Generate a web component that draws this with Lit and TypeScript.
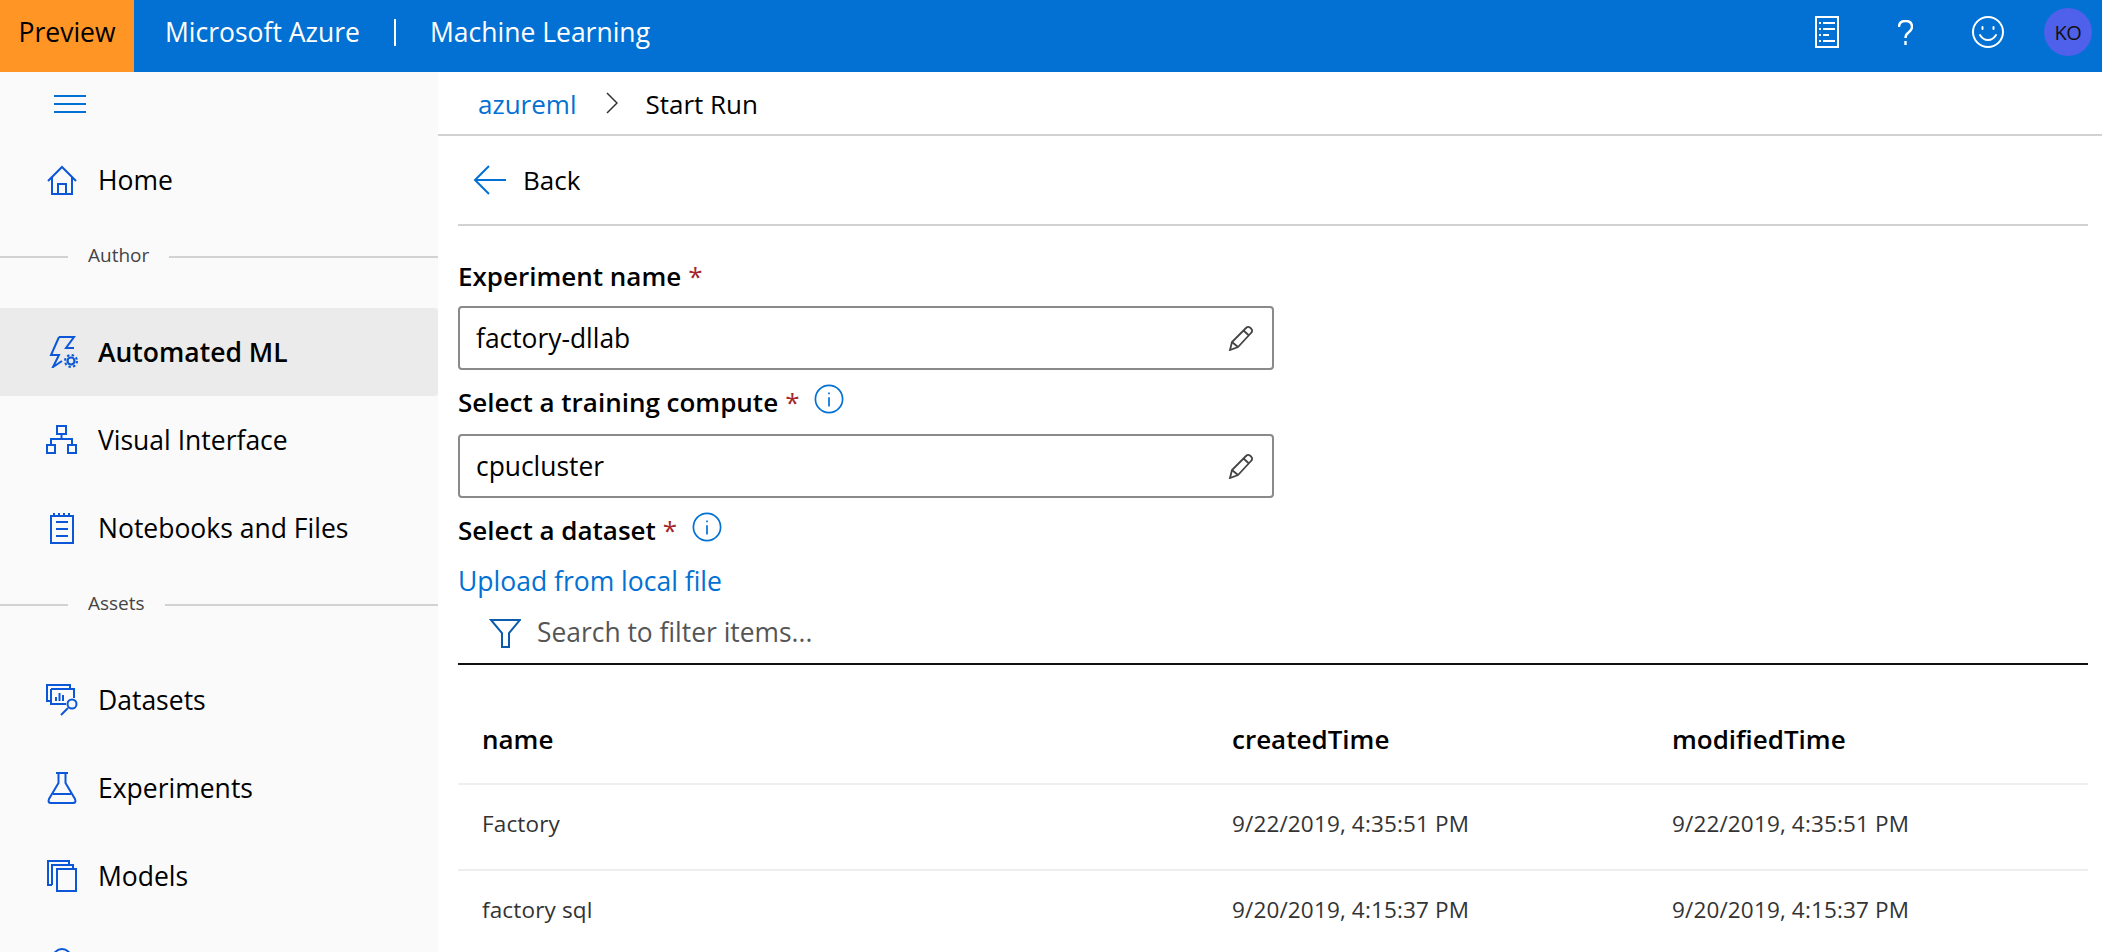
import { LitElement, html, css, svg } from 'lit';
import { customElement } from 'lit/decorators.js';

const icons: Record<string, unknown> = {
  home: svg`<path d="M2 17 16 3l14 14M6 13v17h20V13M12 30V20h8v10"/>`,
  auto: svg`<path d="M13 1h15l-8 11h8M13 1 5 19h8L7 31l9-6"/><circle cx="25" cy="25" r="3.5" stroke-width="2.2"/><circle cx="25" cy="25" r="6" stroke-dasharray="2.4 2.3"/>`,
  visual: svg`<path d="M11 2h9v8h-9zM1 21h8v8H1zM22 21h8v8h-8zM15.5 10v5M5 21v-6h21v6"/>`,
  notebook: svg`<path d="M5 4h22v27H5zM10 10h12M10 17h12M10 24h12M8 1v3M13 1v3M18 1v3M23 1v3"/>`,
  datasets: svg`<path d="M5 17H1V1h23v4"/><path d="M5 5h23v9M5 5v15h15"/><path d="M10 17v-4M13.5 17V9M17 17v-6"/><circle cx="26" cy="20" r="4.5"/><path d="m22 24-7 7"/>`,
  experiments: svg`<path d="M10 1h12M12.5 1v10L3 27q-1.5 4 2 4h22q3.5 0 2-4l-9.5-16V1M7 22h18"/>`,
  models: svg`<path d="M6 25H2V1h21v4M6 25V5h21v4M11 31V9h19v22z"/>`,
  more: svg`<circle cx="16" cy="10" r="9"/>`,
};

const author = [
  { label: 'Automated ML', icon: 'auto', active: true },
  { label: 'Visual Interface', icon: 'visual' },
  { label: 'Notebooks and Files', icon: 'notebook' },
];
const assets = [
  { label: 'Datasets', icon: 'datasets' },
  { label: 'Experiments', icon: 'experiments' },
  { label: 'Models', icon: 'models' },
  { label: '', icon: 'more' },
];
const rows = [
  ['Factory', '9/22/2019, 4:35:51 PM', '9/22/2019, 4:35:51 PM'],
  ['factory sql', '9/20/2019, 4:15:37 PM', '9/20/2019, 4:15:37 PM'],
];

@customElement('app-root')
export class AppRoot extends LitElement {
  static styles = css`
    :host {
      display: block;
      height: 952px;
      overflow: hidden;
      background: #fff;
      color: #000;
      font-family: 'Open Sans', 'Noto Sans', sans-serif;
    }
    svg { display: block; fill: none; stroke: currentColor; stroke-width: 2; }

    .topbar { display: flex; height: 72px; background: #0271d3; color: #fff; font-size: 26.5px; }
    .topbar > div { display: flex; align-items: center; padding-bottom: 8px; }
    .topbar > .preview { justify-content: center; width: 134px; background: #ff9524; color: #000; }
    .topbar > .brand { margin-left: 31px; }
    .topbar > .sep { align-self: center; width: 2px; height: 27px; margin: 0 34px 8px; padding: 0; background: #fff; }
    .topbar > .actions { margin-left: auto; margin-right: 10px; }
    .actions svg { margin-right: 59px; }
    .actions svg.smile { margin-right: 40px; }
    .actions svg.help { stroke-width: 2.4; }
    .avatar { display: flex; align-items: center; justify-content: center; width: 48px; height: 48px; border-radius: 50%; background: #4f60ea; color: #111; font-size: 20px; letter-spacing: -0.5px; }

    .body { display: flex; height: 880px; }
    .side { flex: none; width: 438px; background: #fafafa; }
    .toggle { display: flex; align-items: center; height: 64px; padding-left: 54px; color: #0271d3; }
    .item { display: flex; align-items: center; height: 88px; padding-left: 46px; font-size: 26.5px; box-sizing: border-box; }
    .item svg { flex: none; width: 32px; height: 32px; margin-right: 20px; color: #0b57d8; }
    .item.active { background: #ebebeb; font-weight: 600; border-radius: 0 3px 3px 0; }
    .group { display: flex; align-items: center; height: 84px; padding-bottom: 18px; box-sizing: border-box; font-size: 19px; color: #444; }
    .group span { margin-bottom: 5px; }
    .group::before { content: ''; width: 68px; height: 2px; background: #d2d2d2; margin-right: 20px; }
    .group::after { content: ''; flex: 1; height: 2px; background: #d2d2d2; margin-left: 20px; }

    .main { flex: 1; min-width: 0; }
    .crumbs { display: flex; align-items: center; height: 62px; padding-left: 40px; border-bottom: 2px solid #d2d2d2; font-size: 26px; }
    .crumbs a, .crumbs span { padding-top: 2px; }
    .crumbs a { color: #0271d3; }
    .crumbs svg { width: 12px; height: 22px; margin: 0 27px 0 30px; color: #333; stroke-width: 1.5; }
    .content { padding: 0 14px 0 20px; }
    .back { display: flex; align-items: center; height: 88px; border-bottom: 2px solid #d2d2d2; font-size: 26px; }
    .back svg { width: 34px; height: 32px; margin: 0 16px 0 15px; color: #0271d3; }

    .label { display: flex; align-items: center; height: 36px; margin: 14px 0; font-size: 26px; font-weight: 600; }
    .label.first { margin: 32px 0 12px; }
    .label .req { margin-left: 7px; color: #a4262c; font-weight: 400; }
    .label svg { width: 30px; height: 30px; margin: 0 0 6px 15px; color: #0271d3; stroke-width: 1.8; }
    .field { display: flex; align-items: center; justify-content: space-between; width: 816px; height: 64px; box-sizing: border-box; padding: 0 18px 0 16px; border: 2px solid #8a8a8a; border-radius: 4px; font-size: 26.4px; }
    .field svg { width: 26px; height: 26px; color: #444; stroke-width: 1.8; }
    .link { margin-top: -1px; color: #0271d3; font-size: 26.5px; line-height: 40px; }
    .search { display: flex; align-items: center; height: 62px; border-bottom: 2px solid #111; padding-left: 31px; font-size: 26.4px; color: #555; }
    .search svg { width: 32px; height: 32px; margin-right: 16px; color: #0b5cad; }

    .row { display: grid; grid-template-columns: 750px 440px 1fr; padding: 0 0 8px 24px; height: 86px; align-items: center; border-bottom: 2px solid #eee; box-sizing: border-box; font-size: 22.5px; letter-spacing: 0.15px; color: #333; }
    .row.head { height: 120px; padding: 30px 0 0 24px; font-size: 26px; font-weight: 600; color: #000; letter-spacing: 0; }
  `;

  private nav(it: { label: string; icon: string; active?: boolean }) {
    return html`<div class="item ${it.active ? 'active' : ''}">
      <svg viewBox="0 0 32 32">${icons[it.icon]}</svg>${it.label}
    </div>`;
  }

  private info() {
    return html`<svg viewBox="0 0 32 32"><circle cx="16" cy="16" r="14.5"/><path d="M16 14v10M16 9v2"/></svg>`;
  }

  private pencil() {
    return html`<svg viewBox="0 0 26 26"><path d="m2 25 2-8L18 3q2-2 4-.5l1.5 1.5q1.5 2-.5 4L10 22zM4 17l6 5M15.5 5.500l5.500 5"/></svg>`;
  }

  render() {
    return html`
      <header class="topbar">
        <div class="preview">Preview</div>
        <div class="brand">Microsoft Azure</div>
        <div class="sep"></div>
        <div>Machine Learning</div>
        <div class="actions">
          <svg width="24" height="32" viewBox="0 0 24 32"><path d="M1 1h22v30H1zM8 7h12M8 13h12M8 19h6M8 25h12M4 7h2M4 13h2M4 19h2M4 25h2"/></svg>
          <svg class="help" width="15" height="25" viewBox="0 0 15 25"><path d="M1 7q0-6 6.5-6T14 7q0 3-3.500 5.500Q7.500 14.500 7.500 18M7.500 21v4"/></svg>
          <svg class="smile" width="32" height="32" viewBox="0 0 32 32"><circle cx="16" cy="16" r="15"/><path d="M8 19q3 5 8 5t8-5M10.5 11v2M21.5 11v2" stroke-linecap="round"/></svg>
          <div class="avatar">KO</div>
        </div>
      </header>
      <div class="body">
        <nav class="side">
          <div class="toggle">
            <svg width="32" height="18" viewBox="0 0 32 18"><path d="M0 1h32M0 9h32M0 17h32"/></svg>
          </div>
          ${this.nav({ label: 'Home', icon: 'home' })}
          <div class="group"><span>Author</span></div>
          ${author.map((it) => this.nav(it))}
          <div class="group"><span>Assets</span></div>
          ${assets.map((it) => this.nav(it))}
        </nav>
        <main class="main">
          <div class="crumbs">
            <a>azureml</a>
            <svg viewBox="0 0 12 22"><path d="m1 1 10 10L1 21"/></svg>
            <span>Start Run</span>
          </div>
          <div class="content">
            <div class="back">
              <svg viewBox="0 0 34 32"><path d="M33 16H2M16 2 2 16l14 14"/></svg>
              Back
            </div>
            <div class="label first">Experiment name<span class="req">*</span></div>
            <div class="field">factory-dllab ${this.pencil()}</div>
            <div class="label">Select a training compute<span class="req">*</span>${this.info()}</div>
            <div class="field">cpucluster ${this.pencil()}</div>
            <div class="label">Select a dataset<span class="req">*</span>${this.info()}</div>
            <div class="link">Upload from local file</div>
            <div class="search">
              <svg viewBox="0 0 32 32"><path d="M2 4h29L20 17v14h-7V17z"/></svg>
              Search to filter items...
            </div>
            <div class="row head"><span>name</span><span>createdTime</span><span>modifiedTime</span></div>
            ${rows.map((r) => html`<div class="row"><span>${r[0]}</span><span>${r[1]}</span><span>${r[2]}</span></div>`)}
          </div>
        </main>
      </div>
    `;
  }
}
